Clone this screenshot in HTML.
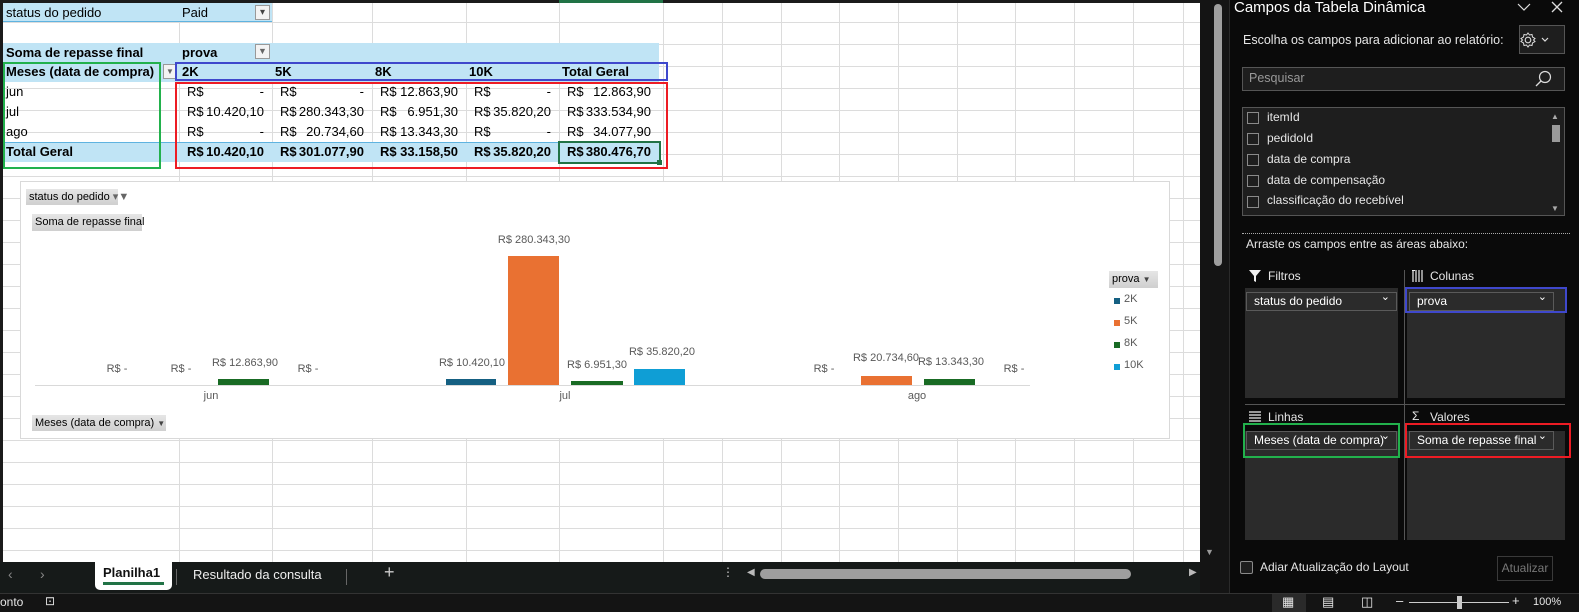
<!DOCTYPE html>
<html><head><meta charset="utf-8"><style>
*{margin:0;padding:0;box-sizing:border-box}
body{width:1579px;height:612px;overflow:hidden;background:#0a0a0a;font-family:"Liberation Sans",sans-serif;position:relative}
.a{position:absolute}
#grid{left:0;top:0;width:1200px;height:562px;background:#fff;overflow:hidden;
background-image:repeating-linear-gradient(to bottom,transparent 0,transparent 21px,#dcdcdc 21px,#dcdcdc 22px);background-position:0 1px}
.v{position:absolute;top:0;width:1px;height:562px;background:#dcdcdc}
.c{position:absolute;font-size:13px;color:#000;line-height:20px;white-space:nowrap}
.b{font-weight:bold}
.hl{position:absolute;background:#c0e4f5}
.num{position:absolute;font-size:13px;line-height:20px;white-space:nowrap}
.num .l{position:absolute;left:8px}
.num .r{position:absolute;right:8px}
.box{position:absolute;border:2px solid}
.lbl{position:absolute;font-size:11px;color:#595959;white-space:nowrap;transform:translateX(-50%)}
.bar{position:absolute}
.btn{position:absolute;background:linear-gradient(#e6e6e6,#cfcfcf);font-size:11px;color:#000;line-height:17px;padding-left:3px;white-space:nowrap}
.w{color:#fff}
.pt{position:absolute;font-size:12px;color:#e6e6e6;white-space:nowrap}
.area{position:absolute;background:#2b2b2b}
.dd{position:absolute;border:1px solid #5a5a5a;background:#2b2b2b;font-size:12px;color:#fff;line-height:17px;padding-left:7px;white-space:nowrap}
.dd:after{content:"⌄";position:absolute;right:6px;top:-4px;font-size:11px}
.cb{position:absolute;width:12px;height:12px;border:1px solid #8a8a8a}
</style></head><body>
<div id="grid" class="a">
 <div class="v" style="left:179px"></div><div class="v" style="left:272px"></div><div class="v" style="left:372px"></div><div class="v" style="left:466px"></div><div class="v" style="left:559px"></div><div class="v" style="left:663px"></div><div class="v" style="left:722px"></div><div class="v" style="left:781px"></div><div class="v" style="left:839px"></div><div class="v" style="left:898px"></div><div class="v" style="left:957px"></div><div class="v" style="left:1015px"></div><div class="v" style="left:1074px"></div><div class="v" style="left:1133px"></div><div class="v" style="left:1183px"></div>
 <div class="a" style="left:0;top:0;width:1200px;height:3px;background:#1b1b1b"></div>
 <div class="a" style="left:559px;top:0;width:104px;height:3px;background:#217346"></div>
 <div class="a" style="left:0;top:0;width:3px;height:562px;background:#1b1b1b"></div>
 <div class="hl" style="left:3px;top:3px;width:269px;height:19px;border-bottom:1px solid #5fb3e0"></div>
 <div class="hl" style="left:3px;top:43px;width:656px;height:39px"></div>
 <div class="hl" style="left:3px;top:142px;width:656px;height:20px;border-top:1px solid #5fb3e0"></div>
 <div class="c" style="left:6px;top:3px">status do pedido</div>
 <div class="c" style="left:182px;top:3px">Paid</div>
 <div class="a" style="left:255px;top:5px;width:15px;height:15px;border:1px solid #999;background:#f3f3f3;font-size:10px;text-align:center;line-height:13px;color:#444">▾</div>
 <div class="c b" style="left:6px;top:43px">Soma de repasse final</div>
 <div class="c b" style="left:182px;top:43px">prova</div>
 <div class="a" style="left:255px;top:44px;width:15px;height:15px;border:1px solid #999;background:#f3f3f3;font-size:9px;text-align:center;line-height:13px;color:#666">▼</div>
 <div class="c b" style="left:6px;top:62px">Meses (data de compra)</div>
 <div class="a" style="left:163px;top:64px;width:14px;height:15px;border:1px solid #999;background:#f3f3f3;font-size:8px;text-align:center;line-height:13px;color:#666">▼</div>
 <div class="c b" style="left:182px;top:62px">2K</div><div class="c b" style="left:275px;top:62px">5K</div><div class="c b" style="left:375px;top:62px">8K</div><div class="c b" style="left:469px;top:62px">10K</div><div class="c b" style="left:562px;top:62px">Total Geral</div>
 <div class="c" style="left:6px;top:82px">jun</div><div class="c" style="left:6px;top:102px">jul</div><div class="c" style="left:6px;top:122px">ago</div><div class="c b" style="left:6px;top:142px">Total Geral</div>
 <div class="num" style="left:179px;top:82px;width:93px"><span class="l">R$</span><span class="r">-</span></div>
 <div class="num" style="left:272px;top:82px;width:100px"><span class="l">R$</span><span class="r">-</span></div>
 <div class="num" style="left:372px;top:82px;width:94px"><span class="l">R$</span><span class="r">12.863,90</span></div>
 <div class="num" style="left:466px;top:82px;width:93px"><span class="l">R$</span><span class="r">-</span></div>
 <div class="num" style="left:559px;top:82px;width:100px"><span class="l">R$</span><span class="r">12.863,90</span></div>
 <div class="num" style="left:179px;top:102px;width:93px"><span class="l">R$</span><span class="r">10.420,10</span></div>
 <div class="num" style="left:272px;top:102px;width:100px"><span class="l">R$</span><span class="r">280.343,30</span></div>
 <div class="num" style="left:372px;top:102px;width:94px"><span class="l">R$</span><span class="r">6.951,30</span></div>
 <div class="num" style="left:466px;top:102px;width:93px"><span class="l">R$</span><span class="r">35.820,20</span></div>
 <div class="num" style="left:559px;top:102px;width:100px"><span class="l">R$</span><span class="r">333.534,90</span></div>
 <div class="num" style="left:179px;top:122px;width:93px"><span class="l">R$</span><span class="r">-</span></div>
 <div class="num" style="left:272px;top:122px;width:100px"><span class="l">R$</span><span class="r">20.734,60</span></div>
 <div class="num" style="left:372px;top:122px;width:94px"><span class="l">R$</span><span class="r">13.343,30</span></div>
 <div class="num" style="left:466px;top:122px;width:93px"><span class="l">R$</span><span class="r">-</span></div>
 <div class="num" style="left:559px;top:122px;width:100px"><span class="l">R$</span><span class="r">34.077,90</span></div>
 <div class="num b" style="left:179px;top:142px;width:93px"><span class="l">R$</span><span class="r">10.420,10</span></div>
 <div class="num b" style="left:272px;top:142px;width:100px"><span class="l">R$</span><span class="r">301.077,90</span></div>
 <div class="num b" style="left:372px;top:142px;width:94px"><span class="l">R$</span><span class="r">33.158,50</span></div>
 <div class="num b" style="left:466px;top:142px;width:93px"><span class="l">R$</span><span class="r">35.820,20</span></div>
 <div class="num b" style="left:559px;top:142px;width:100px"><span class="l">R$</span><span class="r">380.476,70</span></div>
 <div class="box" style="left:558px;top:141px;width:103px;height:23px;border-color:#217346"></div>
 <div class="a" style="left:657px;top:160px;width:5px;height:5px;background:#217346"></div>
 <div class="box" style="left:3px;top:62px;width:158px;height:107px;border-color:#22b14c"></div>
 <div class="box" style="left:175px;top:62px;width:493px;height:19px;border-color:#3f48cc"></div>
 <div class="box" style="left:175px;top:82px;width:493px;height:87px;border-color:#ed1c24"></div>
 <div class="a" style="left:20px;top:181px;width:1150px;height:258px;background:#fff;border:1px solid #d9d9d9"></div>
 <div class="btn" style="left:26px;top:189px;width:92px;height:16px;line-height:16px">status do pedido <span style="color:#666">▾▼</span></div>
 <div class="btn" style="left:32px;top:214px;width:110px;height:17px">Soma de repasse final</div>
 <div class="btn" style="left:32px;top:415px;width:134px;height:16px;line-height:16px">Meses (data de compra) <span style="font-size:8px;color:#444">▼</span></div>
 <div class="a" style="left:35px;top:385px;width:995px;height:1px;background:#d9d9d9"></div>
 <div class="bar" style="left:218px;top:379px;width:51px;height:6px;background:#196b24"></div>
 <div class="bar" style="left:446px;top:379px;width:50px;height:6px;background:#156082"></div>
 <div class="bar" style="left:508px;top:256px;width:51px;height:129px;background:#e97132"></div>
 <div class="bar" style="left:571px;top:381px;width:52px;height:4px;background:#196b24"></div>
 <div class="bar" style="left:634px;top:369px;width:51px;height:16px;background:#0f9ed5"></div>
 <div class="bar" style="left:861px;top:376px;width:51px;height:9px;background:#e97132"></div>
 <div class="bar" style="left:924px;top:379px;width:51px;height:6px;background:#196b24"></div>
 <div class="lbl" style="left:117px;top:363px">R$ -</div>
 <div class="lbl" style="left:181px;top:363px">R$ -</div>
 <div class="lbl" style="left:245px;top:357px">R$ 12.863,90</div>
 <div class="lbl" style="left:308px;top:363px">R$ -</div>
 <div class="lbl" style="left:472px;top:357px">R$ 10.420,10</div>
 <div class="lbl" style="left:534px;top:234px">R$ 280.343,30</div>
 <div class="lbl" style="left:597px;top:359px">R$ 6.951,30</div>
 <div class="lbl" style="left:662px;top:346px">R$ 35.820,20</div>
 <div class="lbl" style="left:824px;top:363px">R$ -</div>
 <div class="lbl" style="left:886px;top:352px">R$ 20.734,60</div>
 <div class="lbl" style="left:951px;top:356px">R$ 13.343,30</div>
 <div class="lbl" style="left:1014px;top:363px">R$ -</div>
 <div class="lbl" style="left:211px;top:390px">jun</div>
 <div class="lbl" style="left:565px;top:390px">jul</div>
 <div class="lbl" style="left:917px;top:390px">ago</div>
 <div class="btn" style="left:1109px;top:271px;width:49px;height:17px">prova <span style="font-size:8px;color:#444">▼</span></div>
 <div class="a" style="left:1114px;top:298px;width:6px;height:6px;background:#156082"></div><div class="a" style="left:1124px;top:293px;font-size:11px;color:#595959">2K</div>
 <div class="a" style="left:1114px;top:320px;width:6px;height:6px;background:#e97132"></div><div class="a" style="left:1124px;top:315px;font-size:11px;color:#595959">5K</div>
 <div class="a" style="left:1114px;top:342px;width:6px;height:6px;background:#196b24"></div><div class="a" style="left:1124px;top:337px;font-size:11px;color:#595959">8K</div>
 <div class="a" style="left:1114px;top:364px;width:6px;height:6px;background:#0f9ed5"></div><div class="a" style="left:1124px;top:359px;font-size:11px;color:#595959">10K</div>
</div>
<div class="a" style="left:1200px;top:0;width:29px;height:593px;background:#141414"></div>
<div class="a" style="left:1214px;top:4px;width:8px;height:262px;background:#9e9e9e;border-radius:4px"></div>
<div class="a" style="left:1205px;top:547px;font-size:9px;color:#9a9a9a">▼</div>
<div class="a" style="left:1229px;top:0;width:1px;height:593px;background:#2a2a2a"></div>
<div class="a w" style="left:1234px;top:-1px;font-size:15px">Campos da Tabela Dinâmica</div>
<svg class="a" style="left:1516px;top:2px" width="16" height="10"><path d="M2 2 L8 8 L14 2" fill="none" stroke="#ddd" stroke-width="1.2"/></svg>
<svg class="a" style="left:1550px;top:0" width="14" height="14"><path d="M2 2 L12 12 M12 2 L2 12" stroke="#ddd" stroke-width="1.3"/></svg>
<div class="pt" style="left:1243px;top:33px;font-size:12.5px">Escolha os campos para adicionar ao relatório:</div>
<div class="a" style="left:1519px;top:25px;width:46px;height:29px;border:1px solid #555;background:#1e1e1e"></div>
<svg class="a" style="left:1518px;top:30px" width="20" height="20"><circle cx="10" cy="10" r="2.8" fill="none" stroke="#ddd" stroke-width="1.1"/><path d="M10 3 L11.5 5 L14 4.5 L14.5 7 L17 8.5 L15.5 10 L17 11.5 L14.5 13 L14 15.5 L11.5 15 L10 17 L8.5 15 L6 15.5 L5.5 13 L3 11.5 L4.5 10 L3 8.5 L5.5 7 L6 4.5 L8.5 5 Z" fill="none" stroke="#ddd" stroke-width="1"/></svg>
<svg class="a" style="left:1541px;top:37px" width="8" height="6"><path d="M1 1 L4 4 L7 1" fill="none" stroke="#ddd" stroke-width="1.2"/></svg>
<div class="a" style="left:1242px;top:67px;width:323px;height:24px;border:1px solid #555;background:#1e1e1e;font-size:12.5px;color:#999;line-height:20px;padding-left:6px">Pesquisar</div>
<svg class="a" style="left:1534px;top:69px" width="20" height="20"><circle cx="11" cy="8" r="5.5" fill="none" stroke="#ddd" stroke-width="1.2"/><line x1="7" y1="12" x2="2" y2="17" stroke="#ddd" stroke-width="1.3"/></svg>
<div class="a" style="left:1242px;top:107px;width:323px;height:109px;border:1px solid #555;background:#1e1e1e"></div>
<div class="a" style="left:1551px;top:112px;font-size:8px;color:#aaa">▲</div>
<div class="a" style="left:1552px;top:125px;width:8px;height:17px;background:#9a9a9a"></div>
<div class="a" style="left:1551px;top:204px;font-size:8px;color:#aaa">▼</div>
<div class="cb" style="left:1247px;top:112px"></div><div class="pt" style="left:1267px;top:110px">itemId</div>
<div class="cb" style="left:1247px;top:133px"></div><div class="pt" style="left:1267px;top:131px">pedidoId</div>
<div class="cb" style="left:1247px;top:154px"></div><div class="pt" style="left:1267px;top:152px">data de compra</div>
<div class="cb" style="left:1247px;top:175px"></div><div class="pt" style="left:1267px;top:173px">data de compensação</div>
<div class="cb" style="left:1247px;top:196px"></div><div class="pt" style="left:1267px;top:193px">classificação do recebível</div>
<div class="a" style="left:1242px;top:233px;width:328px;border-top:1px dotted #aaa"></div>
<div class="pt" style="left:1246px;top:237px">Arraste os campos entre as áreas abaixo:</div>
<svg class="a" style="left:1249px;top:270px" width="12" height="12"><path d="M0 0 H12 L7 6 V12 L5 11 V6 Z" fill="#eee"/></svg><div class="pt" style="left:1268px;top:269px">Filtros</div>
<svg class="a" style="left:1412px;top:270px" width="12" height="12"><path d="M1 0V12M4 0V12M7 0V12M10 0V12" stroke="#eee" stroke-width="1.2"/><path d="M0 0.5H3" stroke="#eee"/></svg><div class="pt" style="left:1430px;top:269px">Colunas</div>
<div class="area" style="left:1245px;top:288px;width:153px;height:110px"></div>
<div class="area" style="left:1407px;top:288px;width:158px;height:110px"></div>
<div class="a" style="left:1404px;top:270px;width:1px;height:270px;background:#555"></div>
<div class="a" style="left:1245px;top:404px;width:320px;height:1px;background:#555"></div>
<svg class="a" style="left:1249px;top:411px" width="12" height="12"><path d="M0 1H12M0 4H12M0 7H12M0 10H12" stroke="#eee" stroke-width="1.3"/></svg><div class="pt" style="left:1268px;top:410px">Linhas</div>
<div class="pt" style="left:1412px;top:409px">Σ</div><div class="pt" style="left:1430px;top:410px">Valores</div>
<div class="area" style="left:1245px;top:431px;width:153px;height:109px"></div>
<div class="area" style="left:1407px;top:431px;width:158px;height:109px"></div>
<div class="dd" style="left:1246px;top:292px;width:151px;height:19px">status do pedido</div>
<div class="dd" style="left:1409px;top:292px;width:145px;height:19px">prova</div>
<div class="dd" style="left:1246px;top:431px;width:151px;height:19px">Meses (data de compra)</div>
<div class="dd" style="left:1409px;top:431px;width:145px;height:19px">Soma de repasse final</div>
<div class="box" style="left:1405px;top:287px;width:162px;height:26px;border-color:#3f48cc"></div>
<div class="box" style="left:1243px;top:423px;width:157px;height:35px;border-color:#22b14c"></div>
<div class="box" style="left:1405px;top:423px;width:166px;height:35px;border-color:#ed1c24"></div>
<div class="cb" style="left:1240px;top:561px;width:13px;height:13px;border-radius:2px;background:#1e1e1e"></div>
<div class="pt" style="left:1260px;top:560px">Adiar Atualização do Layout</div>
<div class="a" style="left:1497px;top:556px;width:56px;height:25px;border:1px solid #3a3a3a;font-size:12px;color:#777;line-height:23px;text-align:center">Atualizar</div>
<div class="a" style="left:0;top:562px;width:1200px;height:31px;background:#161a19"></div>
<div class="pt" style="left:8px;top:566px;color:#888;font-size:14px">‹</div>
<div class="pt" style="left:40px;top:566px;color:#888;font-size:14px">›</div>
<div class="a" style="left:95px;top:562px;width:77px;height:28px;background:#fff;border-radius:0 0 5px 5px;font-size:13px;font-weight:bold;line-height:22px;padding-left:8px;color:#111">Planilha1</div>
<div class="a" style="left:103px;top:582px;width:61px;height:3px;background:#217346"></div>
<div class="a" style="left:176px;top:569px;width:1px;height:16px;background:#666"></div>
<div class="pt" style="left:193px;top:567px;font-size:13px;color:#eee">Resultado da consulta</div>
<div class="a" style="left:346px;top:569px;width:1px;height:16px;background:#666"></div>
<div class="pt" style="left:384px;top:562px;font-size:18px;color:#ccc">+</div>
<div class="pt" style="left:722px;top:565px;color:#ccc;font-size:12px">⋮</div>
<div class="pt" style="left:747px;top:567px;color:#bbb;font-size:10px">◀</div>
<div class="a" style="left:760px;top:569px;width:371px;height:10px;background:#9e9e9e;border-radius:5px"></div>
<div class="pt" style="left:1189px;top:567px;color:#bbb;font-size:10px">▶</div>
<div class="a" style="left:0;top:593px;width:1579px;height:19px;background:#141414;border-top:1px solid #333"></div>
<div class="pt" style="left:0;top:595px;font-size:12px">onto</div>
<div class="pt" style="left:45px;top:594px;font-size:12px">⊡</div>
<div class="a" style="left:1272px;top:594px;width:34px;height:18px;background:#2a2a2a"></div>
<div class="pt" style="left:1282px;top:594px;font-size:13px">▦</div>
<div class="pt" style="left:1322px;top:594px;font-size:13px">▤</div>
<div class="pt" style="left:1361px;top:594px;font-size:13px">◫</div>
<div class="pt" style="left:1396px;top:593px;font-size:13px">–</div>
<div class="a" style="left:1409px;top:602px;width:100px;height:1px;background:#ccc"></div>
<div class="a" style="left:1457px;top:596px;width:5px;height:13px;background:#ccc"></div>
<div class="pt" style="left:1512px;top:593px;font-size:13px">+</div>
<div class="pt" style="left:1533px;top:596px;font-size:11px">100%</div>
</body></html>
